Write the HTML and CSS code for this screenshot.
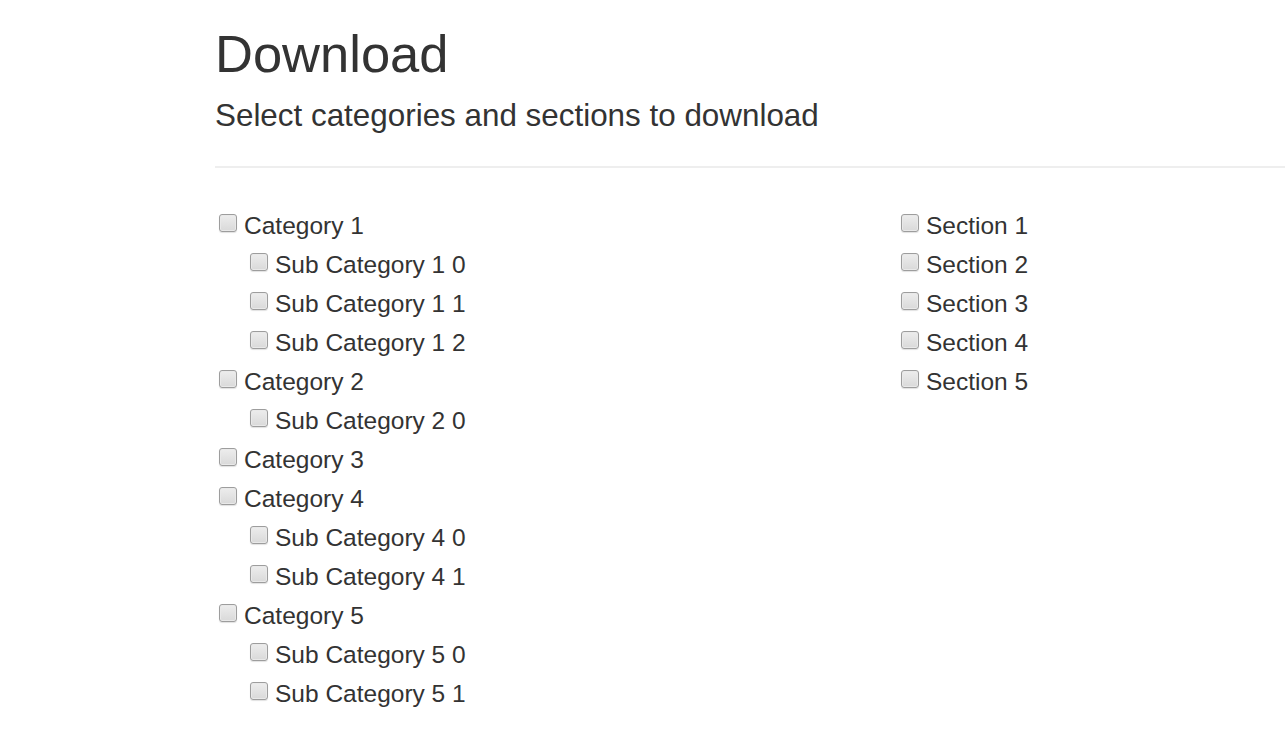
FILE: index.html
```html
<!DOCTYPE html>
<html>
<head>
<meta charset="utf-8">
<title>Download</title>
<link rel="stylesheet" href="styles.css">
</head>
<body>
<div class="page">
  <header class="head">
    <h1 class="title">Download</h1>
    <p class="subtitle">Select categories and sections to download</p>
  </header>
  <hr class="rule">
  <div class="cols">
    <ul class="list">
      <li class="item"><label class="opt"><input type="checkbox" class="box"><span>Category 1</span></label></li>
      <li class="item sub"><label class="opt"><input type="checkbox" class="box"><span>Sub Category 1 0</span></label></li>
      <li class="item sub"><label class="opt"><input type="checkbox" class="box"><span>Sub Category 1 1</span></label></li>
      <li class="item sub"><label class="opt"><input type="checkbox" class="box"><span>Sub Category 1 2</span></label></li>
      <li class="item"><label class="opt"><input type="checkbox" class="box"><span>Category 2</span></label></li>
      <li class="item sub"><label class="opt"><input type="checkbox" class="box"><span>Sub Category 2 0</span></label></li>
      <li class="item"><label class="opt"><input type="checkbox" class="box"><span>Category 3</span></label></li>
      <li class="item"><label class="opt"><input type="checkbox" class="box"><span>Category 4</span></label></li>
      <li class="item sub"><label class="opt"><input type="checkbox" class="box"><span>Sub Category 4 0</span></label></li>
      <li class="item sub"><label class="opt"><input type="checkbox" class="box"><span>Sub Category 4 1</span></label></li>
      <li class="item"><label class="opt"><input type="checkbox" class="box"><span>Category 5</span></label></li>
      <li class="item sub"><label class="opt"><input type="checkbox" class="box"><span>Sub Category 5 0</span></label></li>
      <li class="item sub"><label class="opt"><input type="checkbox" class="box"><span>Sub Category 5 1</span></label></li>
    </ul>
    <ul class="list">
      <li class="item"><label class="opt"><input type="checkbox" class="box"><span>Section 1</span></label></li>
      <li class="item"><label class="opt"><input type="checkbox" class="box"><span>Section 2</span></label></li>
      <li class="item"><label class="opt"><input type="checkbox" class="box"><span>Section 3</span></label></li>
      <li class="item"><label class="opt"><input type="checkbox" class="box"><span>Section 4</span></label></li>
      <li class="item"><label class="opt"><input type="checkbox" class="box"><span>Section 5</span></label></li>
    </ul>
  </div>
</div>
</body>
</html>
```

FILE: styles.css
```css
html, body {
  margin: 0;
  padding: 0;
  background: #ffffff;
}

body {
  font-family: "Liberation Sans", Arial, sans-serif;
  color: #333333;
  overflow: hidden;
}

.page {
  padding-left: 215px;
}

.head {
  display: flex;
  flex-direction: column;
}

.title {
  margin: 25px 0 0 0;
  font-size: 52.5px;
  font-weight: normal;
  line-height: 1.1;
  color: #333333;
}

.subtitle {
  margin: 16px 0 0 0;
  font-size: 31.4px;
  line-height: 1.1;
  color: #333333;
}

.rule {
  margin: 33px 0 0 0;
  border: 0;
  border-top: 2px solid #eeeeee;
  height: 0;
}

.cols {
  display: grid;
  grid-template-columns: 682px 1fr;
  margin-top: 38px;
}

.list {
  list-style: none;
  margin: 0;
  padding: 0;
}

.item {
  height: 39px;
  display: flex;
}

.item.sub {
  padding-left: 31px;
}

.opt {
  display: flex;
  align-items: flex-start;
  font-size: 24.5px;
  line-height: 39px;
  color: #333333;
}

.box {
  -webkit-appearance: none;
  appearance: none;
  box-sizing: border-box;
  width: 18px;
  height: 18px;
  margin: 8px 7px 0 4px;
  border: 1px solid #9d9d9d;
  border-radius: 3px;
  background: linear-gradient(#ededed, #d9d9d9);
  box-shadow: inset 0 0 0 1px #e9e9e9, 0 1px 1px rgba(0, 0, 0, 0.12);
}
```
